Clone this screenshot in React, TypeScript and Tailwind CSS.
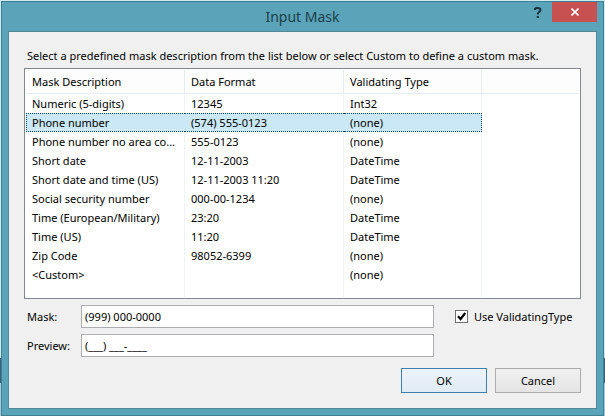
import { useState } from "react";

type Mask = { name: string; format: string; type: string };

const masks: Mask[] = [
  { name: "Numeric (5-digits)", format: "12345", type: "Int32" },
  { name: "Phone number", format: "(574) 555-0123", type: "(none)" },
  { name: "Phone number no area co...", format: "555-0123", type: "(none)" },
  { name: "Short date", format: "12-11-2003", type: "DateTime" },
  { name: "Short date and time (US)", format: "12-11-2003 11:20", type: "DateTime" },
  { name: "Social security number", format: "000-00-1234", type: "(none)" },
  { name: "Time (European/Military)", format: "23:20", type: "DateTime" },
  { name: "Time (US)", format: "11:20", type: "DateTime" },
  { name: "Zip Code", format: "98052-6399", type: "(none)" },
  { name: "<Custom>", format: "", type: "(none)" },
];

function TitleBar() {
  return (
    <header className="grid h-[29px] grid-cols-[1fr_auto_1fr] px-1.5">
      <span />
      <h1 className="text-[14px] leading-[30px] text-[#1c3e4c]">Input Mask</h1>
      <div className="flex items-start justify-end">
        <button aria-label="Help" className="flex h-5 w-7 items-center justify-center">
          <svg viewBox="0 0 8 11" className="h-[11px] w-2" fill="none" stroke="#16303c" strokeWidth="2">
            <path d="M1 3V1.900Q1.600 1 3.500 1Q6.500 1 6.500 3Q6.500 4 5 5Q3.800 5.800 3.800 7.500" />
            <path d="M2.800 10H4.900" />
          </svg>
        </button>
        <button aria-label="Close" className="flex h-5 w-[45px] items-center justify-center bg-[#c75050]">
          <svg viewBox="0 0 8 8" className="size-2" stroke="#fff" strokeWidth="1.6">
            <path d="M0.500 0.500L7.500 7.500M7.500 0.500L0.500 7.500" />
          </svg>
        </button>
      </div>
    </header>
  );
}

function MaskList({ selected, onSelect }: { selected: number; onSelect: (index: number) => void }) {
  const heading = "h-6 border-r border-b border-[#e3edf3] bg-[#fdfdfd] px-1.5 text-left font-normal";
  return (
    <div className="border border-[#828790] bg-white p-px">
      <table className="w-full table-fixed border-separate border-spacing-0">
        <colgroup>
          <col className="w-[159px]" />
          <col className="w-[159px]" />
          <col className="w-[138px]" />
          <col />
        </colgroup>
        <thead>
          <tr>
            <th className={heading}>Mask Description</th>
            <th className={heading}>Data Format</th>
            <th className={heading}>Validating Type</th>
            <th className="border-b border-[#e3edf3] bg-[#fdfdfd]" />
          </tr>
        </thead>
        <tbody>
          {masks.map((mask, index) => {
            const active = index === selected;
            const cell = active
              ? "h-[19px] border-y border-dotted border-[#12405c] bg-[#cbe8f6] whitespace-nowrap leading-[17px]"
              : "h-[19px] border-r border-[#edf3f6] px-1.5 whitespace-nowrap leading-[19px]";
            return (
              <tr key={mask.name} aria-selected={active} onClick={() => onSelect(index)}>
                <td className={active ? `${cell} border-l pr-1.5 pl-[5px]` : cell}>{mask.name}</td>
                <td className={active ? `${cell} px-1.5` : cell}>{mask.format}</td>
                <td className={active ? `${cell} border-r px-1.5` : cell}>{mask.type}</td>
                <td />
              </tr>
            );
          })}
          <tr aria-hidden="true">
            <td className="h-[13px] border-r border-[#edf3f6]" />
            <td className="border-r border-[#edf3f6]" />
            <td className="border-r border-[#edf3f6]" />
            <td />
          </tr>
        </tbody>
      </table>
    </div>
  );
}

export default function App() {
  const [selected, setSelected] = useState(1);
  const [validating, setValidating] = useState(true);
  const field = "h-[23px] min-w-0 border border-[#abadb3] bg-white px-[3px] outline-none";
  const button = "h-[25px] w-[86px] border bg-linear-to-b";

  return (
    <main className="bg-[linear-gradient(#cdebf0_86%,#3f5f7c_86%,#3f5f7c_92%,#a9c9dc_92%)] px-px pt-px font-['Noto_Sans','Open_Sans',sans-serif] text-[11px] leading-4 text-black">
      <section className="border border-[#3f7f92] bg-[#5ba3b9]">
        <TitleBar />
        <form
          className="mx-1.5 mb-1.5 border border-[#4d8798] bg-[#f0f0f0] px-[15px] pt-4 pb-[15px]"
          onSubmit={(event) => event.preventDefault()}
        >
          <p className="mb-1 px-[3px] whitespace-nowrap">
            Select a predefined mask description from the list below or select Custom to define a custom mask.
          </p>
          <MaskList selected={selected} onSelect={setSelected} />
          <div className="mt-1.5 grid grid-cols-[54px_1fr_147px] items-center gap-y-1.5 pl-[3px]">
            <label htmlFor="mask">Mask:</label>
            <input id="mask" className={field} defaultValue="(999) 000-0000" />
            <label className="ml-[21px] flex items-center gap-1.5 whitespace-nowrap">
              <span className="grid">
                <input
                  type="checkbox"
                  checked={validating}
                  onChange={(event) => setValidating(event.target.checked)}
                  className="peer col-start-1 row-start-1 size-[13px] appearance-none border border-[#707070] bg-white"
                />
                <svg
                  viewBox="0 0 13 13"
                  className="pointer-events-none invisible col-start-1 row-start-1 size-[13px] peer-checked:visible"
                  fill="none"
                  stroke="#000"
                  strokeWidth="2.2"
                >
                  <path d="M3 6.300L5.600 9L10.200 3" />
                </svg>
              </span>
              Use ValidatingType
            </label>
            <label htmlFor="preview">Preview:</label>
            <input id="preview" className={field} readOnly value="(___) ___-____" />
          </div>
          <div className="mt-[11px] flex justify-end gap-2">
            <button type="submit" className={`${button} border-[#3c7fb1] from-[#ecf4fb] to-[#e0ebf4]`}>
              OK
            </button>
            <button type="button" className={`${button} border-[#acacac] from-[#f0f0f0] to-[#e5e5e5]`}>
              Cancel
            </button>
          </div>
        </form>
      </section>
    </main>
  );
}
